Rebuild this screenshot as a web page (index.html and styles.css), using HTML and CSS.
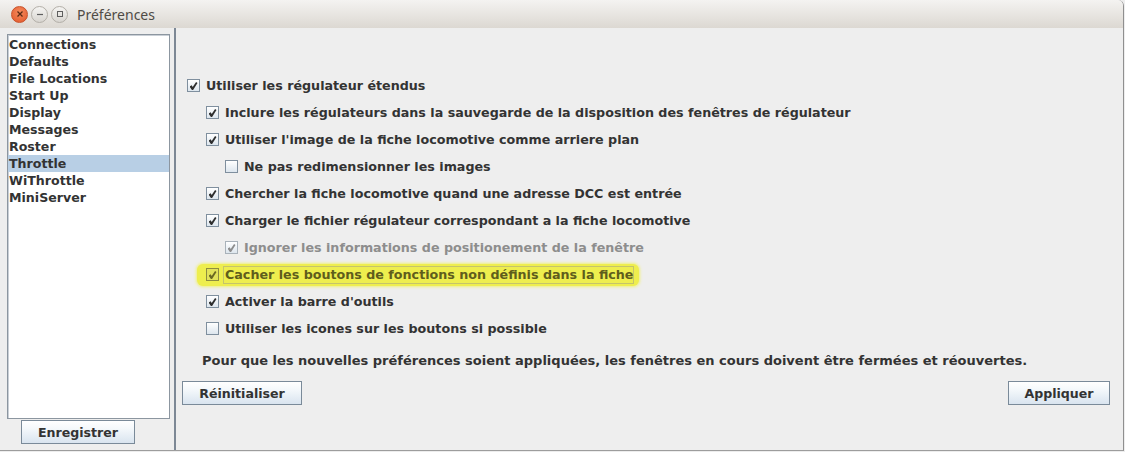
FILE: index.html
```html
<!DOCTYPE html>
<html lang="fr">
<head>
    <meta charset="UTF-8">
    <title>Préférences</title>
    <link rel="stylesheet" href="styles.css">
</head>
<body>
    <div class="window">
        <header class="titlebar">
            <div class="controls">
                <span class="ctl close">
                    <svg width="8" height="8" viewBox="0 0 8 8"><path d="M1.5 1.5 L6.5 6.5 M6.5 1.5 L1.5 6.5" stroke="#5a2a14" stroke-width="1.3" fill="none"/></svg>
                </span>
                <span class="ctl">
                    <svg width="8" height="8" viewBox="0 0 8 8"><path d="M1 4.5 H7" stroke="#5e5e5e" stroke-width="1.2"/></svg>
                </span>
                <span class="ctl">
                    <svg width="8" height="8" viewBox="0 0 8 8"><rect x="1.5" y="1.5" width="5" height="5" stroke="#5e5e5e" stroke-width="1" fill="none"/></svg>
                </span>
            </div>
            <span class="title">Préférences</span>
        </header>

        <div class="content">
            <aside class="sidebar">
                <ul class="list">
                    <li>Connections</li>
                    <li>Defaults</li>
                    <li>File Locations</li>
                    <li>Start Up</li>
                    <li>Display</li>
                    <li>Messages</li>
                    <li>Roster</li>
                    <li class="selected">Throttle</li>
                    <li>WiThrottle</li>
                    <li>MiniServer</li>
                </ul>
                <button class="btn save">Enregistrer</button>
            </aside>

            <section class="panel">
                <div class="options">
                    <div class="opt"><span class="box on"></span>Utiliser les régulateur étendus</div>
                    <div class="opt lvl1"><span class="box on"></span>Inclure les régulateurs dans la sauvegarde de la disposition des fenêtres de régulateur</div>
                    <div class="opt lvl1"><span class="box on"></span>Utiliser l'image de la fiche locomotive comme arriere plan</div>
                    <div class="opt lvl2"><span class="box"></span>Ne pas redimensionner les images</div>
                    <div class="opt lvl1"><span class="box on"></span>Chercher la fiche locomotive quand une adresse DCC est entrée</div>
                    <div class="opt lvl1"><span class="box on"></span>Charger le fichier régulateur correspondant a la fiche locomotive</div>
                    <div class="opt lvl2 disabled"><span class="box on"></span>Ignorer les informations de positionement de la fenêtre</div>
                    <div class="opt lvl1 marked">
                        <span class="marker"><span class="box on"></span><span class="focus">Cacher les boutons de fonctions non définis dans la fiche</span></span>
                    </div>
                    <div class="opt lvl1"><span class="box on"></span>Activer la barre d'outils</div>
                    <div class="opt lvl1"><span class="box"></span>Utiliser les icones sur les boutons si possible</div>
                </div>
                <p class="note">Pour que les nouvelles préférences soient appliquées, les fenêtres en cours doivent être fermées et réouvertes.</p>
                <div class="actions">
                    <button class="btn reset">Réinitialiser</button>
                    <button class="btn apply">Appliquer</button>
                </div>
            </section>
        </div>
    </div>
</body>
</html>
```

FILE: styles.css
```css
body {
    margin: 0;
    background: #ededed;
    font-family: "DejaVu Sans", sans-serif;
    font-weight: bold;
    font-size: 12.7px;
    color: #333333;
}
.window {
    width: 1123px;
    height: 450px;
    border-right: 1px solid #8f8f8f;
    border-bottom: 1px solid #9d9d9d;
    border-top-right-radius: 6px;
    background: #eeeeee;
    overflow: hidden;
}
.titlebar {
    height: 28px;
    display: flex;
    align-items: center;
    background: linear-gradient(#f4f3f1, #dcd8d2);
}
.controls {
    display: flex;
    gap: 3px;
    padding-left: 11px;
}
.ctl {
    width: 15px;
    height: 15px;
    border-radius: 50%;
    border: 1px solid #b3afa8;
    background: linear-gradient(#f5f4f2, #d8d5d0);
    display: flex;
    align-items: center;
    justify-content: center;
}
.ctl.close {
    border-color: #c8512a;
    background: radial-gradient(circle at 50% 35%, #f58a5c, #e2582b);
}
.title {
    margin-left: 9px;
    font-family: "Noto Sans", sans-serif;
    font-weight: normal;
    font-size: 14px;
    color: #4f4b46;
}
.content {
    display: flex;
    height: 422px;
}
.sidebar {
    width: 176px;
    flex: none;
    border-right: 2px solid #7d8895;
    padding: 6px 0 0 7px;
    box-sizing: border-box;
}
.list {
    list-style: none;
    margin: 0;
    padding: 1px 0 0;
    width: 163px;
    height: 385px;
    box-sizing: border-box;
    background: #ffffff;
    border: 1px solid #8c96a0;
    box-shadow: inset 1px 1px 0 #c9cfd6;
    font-size: 12.6px;
}
.list li {
    height: 17px;
    line-height: 17px;
    padding-left: 1px;
}
.list li.selected {
    background: #b8cfe5;
}
.btn {
    font-family: "DejaVu Sans", sans-serif;
    font-weight: bold;
    font-size: 12.6px;
    color: #333333;
    height: 24px;
    padding: 0;
    border: 1px solid #7a8a99;
    border-radius: 0;
    background: linear-gradient(#ffffff, #f4f8fb 35%, #d9e4ef);
}
.save {
    width: 114px;
    margin: 1px 0 0 14px;
}
.panel {
    flex: 1;
    padding: 44px 13px 0 6px;
}
.options {
    margin-left: 5px;
}
.opt {
    height: 27px;
    display: flex;
    align-items: center;
}
.opt.lvl1 { margin-left: 19px; }
.opt.lvl2 { margin-left: 38px; }
.box {
    width: 11px;
    height: 11px;
    border: 1px solid #7f8f9e;
    background: linear-gradient(#ffffff, #dde6ee);
    margin-right: 6px;
    flex: none;
    display: flex;
    align-items: center;
    justify-content: center;
}
.box.on::after {
    content: "";
    width: 8px;
    height: 8px;
    margin-top: 1px;
    background: #2e2e2e;
    clip-path: polygon(0 55%, 28% 40%, 40% 62%, 82% 0, 100% 12%, 45% 100%, 30% 100%);
}
.disabled {
    color: #8d8d8d;
}
.disabled .box {
    border-color: #a9b2ba;
}
.disabled .box.on::after {
    background: #8d8d8d;
}
.marker {
    display: flex;
    align-items: center;
    height: 22px;
    margin-left: -9px;
    padding: 0 5px 0 9px;
    background: #eeee4e;
    border-radius: 6px;
    box-shadow: 0 0 3px 1px #f0f07a;
    color: #5f5d1c;
}
.marker .box {
    border-color: #8e8d40;
    background: #e2e25a;
}
.marker .box.on::after {
    background: #6a6822;
}
.focus {
    border: 1px solid #c5c46a;
    line-height: 16px;
    padding: 0 0 0 1px;
    margin-left: -2px;
}
.note {
    margin: 10px 0 0 20px;
    height: 18px;
    line-height: 18px;
    font-size: 13px;
}
.actions {
    display: flex;
    justify-content: space-between;
    margin-top: 11px;
}
.reset { width: 120px; }
.apply { width: 102px; }
```
